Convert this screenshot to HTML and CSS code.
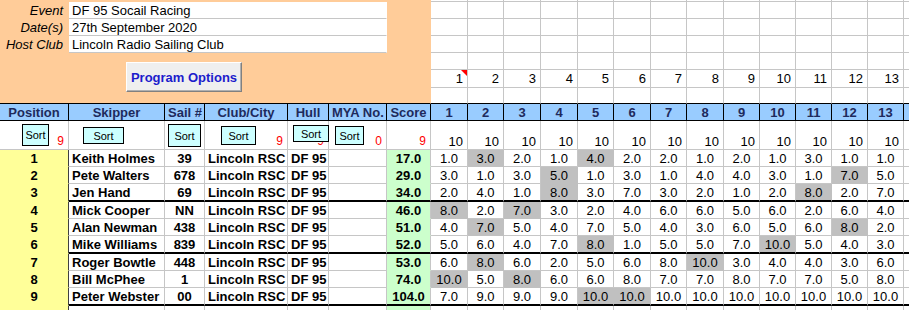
FILE: index.html
```html
<!DOCTYPE html>
<html lang="en">
<head>
<meta charset="UTF-8">
<title>DF 95 Socail Racing - Results</title>
<link rel="stylesheet" href="styles.css">
</head>
<body>

<table class="sheet">
    <colgroup>
        <col class="c-pos"><col class="c-skip"><col class="c-sail"><col class="c-club"><col class="c-hull"><col class="c-mya"><col class="c-score">
        <col class="c-r37"><col class="c-r36"><col class="c-r37"><col class="c-r37"><col class="c-r36"><col class="c-r37"><col class="c-r36">
        <col class="c-r37"><col class="c-r36"><col class="c-r36"><col class="c-r36"><col class="c-r36"><col class="c-r36"><col class="c-extra">
    </colgroup>

    <tr class="edge">
        <td class="band" colspan="7"></td>
        <td></td><td></td><td></td><td></td><td></td><td></td><td></td><td></td><td></td><td></td><td></td><td></td><td></td><td></td>
    </tr>
    <tr class="top">
        <td class="band lbl">Event</td>
        <td class="info" colspan="5">DF 95 Socail Racing</td>
        <td class="band"></td>
        <td></td><td></td><td></td><td></td><td></td><td></td><td></td><td></td><td></td><td></td><td></td><td></td><td></td><td></td>
    </tr>
    <tr class="top">
        <td class="band lbl">Date(s)</td>
        <td class="info" colspan="5">27th September 2020</td>
        <td class="band"></td>
        <td></td><td></td><td></td><td></td><td></td><td></td><td></td><td></td><td></td><td></td><td></td><td></td><td></td><td></td>
    </tr>
    <tr class="top">
        <td class="band lbl">Host Club</td>
        <td class="info" colspan="5">Lincoln Radio Sailing Club</td>
        <td class="band"></td>
        <td></td><td></td><td></td><td></td><td></td><td></td><td></td><td></td><td></td><td></td><td></td><td></td><td></td><td></td>
    </tr>
    <tr class="top">
        <td class="band foot" colspan="7" rowspan="3"><button class="prog">Program Options</button></td>
        <td></td><td></td><td></td><td></td><td></td><td></td><td></td><td></td><td></td><td></td><td></td><td></td><td></td><td></td>
    </tr>
    <tr class="nums">
        <td class="note">1</td><td>2</td><td>3</td><td>4</td><td>5</td><td>6</td><td>7</td><td>8</td><td>9</td><td>10</td><td>11</td><td>12</td><td>13</td><td></td>
    </tr>
    <tr class="gap">
        <td></td><td></td><td></td><td></td><td></td><td></td><td></td><td></td><td></td><td></td><td></td><td></td><td></td><td></td>
    </tr>

    <tr class="hd">
        <td>Position</td><td>Skipper</td><td>Sail #</td><td>Club/City</td><td>Hull</td><td>MYA No.</td><td>Score</td>
        <td>1</td><td>2</td><td>3</td><td>4</td><td>5</td><td>6</td><td>7</td><td>8</td><td>9</td><td>10</td><td>11</td><td>12</td><td>13</td><td></td>
    </tr>

    <tr class="srt">
        <td><button class="sort s-pos">Sort</button><span class="cnt">9</span></td>
        <td><button class="sort s-skip">Sort</button></td>
        <td><button class="sort s-sail">Sort</button></td>
        <td><button class="sort s-club">Sort</button><span class="cnt">9</span></td>
        <td><button class="sort s-hull">Sort</button><span class="cnt">9</span></td>
        <td><button class="sort s-mya">Sort</button><span class="cnt">0</span></td>
        <td><span class="cnt">9</span></td>
        <td>10</td><td>10</td><td>10</td><td>10</td><td>10</td><td>10</td><td>10</td><td>10</td><td>10</td><td>10</td><td>10</td><td>10</td><td>10</td><td></td>
    </tr>

    <tr class="row">
        <td class="pos">1</td><td class="txt">Keith Holmes</td><td class="sail">39</td><td class="txt">Lincoln RSC</td><td class="txt">DF 95</td><td></td><td class="score">17.0</td>
        <td class="r">1.0</td><td class="r drop">3.0</td><td class="r">2.0</td><td class="r">1.0</td><td class="r drop">4.0</td><td class="r">2.0</td><td class="r">2.0</td><td class="r">1.0</td><td class="r">2.0</td><td class="r">1.0</td><td class="r">3.0</td><td class="r">1.0</td><td class="r">1.0</td><td></td>
    </tr>
    <tr class="row">
        <td class="pos">2</td><td class="txt">Pete Walters</td><td class="sail">678</td><td class="txt">Lincoln RSC</td><td class="txt">DF 95</td><td></td><td class="score">29.0</td>
        <td class="r">3.0</td><td class="r">1.0</td><td class="r">3.0</td><td class="r drop">5.0</td><td class="r">1.0</td><td class="r">3.0</td><td class="r">1.0</td><td class="r">4.0</td><td class="r">4.0</td><td class="r">3.0</td><td class="r">1.0</td><td class="r drop">7.0</td><td class="r">5.0</td><td></td>
    </tr>
    <tr class="row cut">
        <td class="pos">3</td><td class="txt">Jen Hand</td><td class="sail">69</td><td class="txt">Lincoln RSC</td><td class="txt">DF 95</td><td></td><td class="score">34.0</td>
        <td class="r">2.0</td><td class="r">4.0</td><td class="r">1.0</td><td class="r drop">8.0</td><td class="r">3.0</td><td class="r">7.0</td><td class="r">3.0</td><td class="r">2.0</td><td class="r">1.0</td><td class="r">2.0</td><td class="r drop">8.0</td><td class="r">2.0</td><td class="r">7.0</td><td></td>
    </tr>
    <tr class="row">
        <td class="pos">4</td><td class="txt">Mick Cooper</td><td class="sail">NN</td><td class="txt">Lincoln RSC</td><td class="txt">DF 95</td><td></td><td class="score">46.0</td>
        <td class="r drop">8.0</td><td class="r">2.0</td><td class="r drop">7.0</td><td class="r">3.0</td><td class="r">2.0</td><td class="r">4.0</td><td class="r">6.0</td><td class="r">6.0</td><td class="r">5.0</td><td class="r">6.0</td><td class="r">2.0</td><td class="r">6.0</td><td class="r">4.0</td><td></td>
    </tr>
    <tr class="row">
        <td class="pos">5</td><td class="txt">Alan Newman</td><td class="sail">438</td><td class="txt">Lincoln RSC</td><td class="txt">DF 95</td><td></td><td class="score">51.0</td>
        <td class="r">4.0</td><td class="r drop">7.0</td><td class="r">5.0</td><td class="r">4.0</td><td class="r">7.0</td><td class="r">5.0</td><td class="r">4.0</td><td class="r">3.0</td><td class="r">6.0</td><td class="r">5.0</td><td class="r">6.0</td><td class="r drop">8.0</td><td class="r">2.0</td><td></td>
    </tr>
    <tr class="row cut">
        <td class="pos">6</td><td class="txt">Mike Williams</td><td class="sail">839</td><td class="txt">Lincoln RSC</td><td class="txt">DF 95</td><td></td><td class="score">52.0</td>
        <td class="r">5.0</td><td class="r">6.0</td><td class="r">4.0</td><td class="r">7.0</td><td class="r drop">8.0</td><td class="r">1.0</td><td class="r">5.0</td><td class="r">5.0</td><td class="r">7.0</td><td class="r drop">10.0</td><td class="r">5.0</td><td class="r">4.0</td><td class="r">3.0</td><td></td>
    </tr>
    <tr class="row">
        <td class="pos">7</td><td class="txt">Roger Bowtle</td><td class="sail">448</td><td class="txt">Lincoln RSC</td><td class="txt">DF 95</td><td></td><td class="score">53.0</td>
        <td class="r">6.0</td><td class="r drop">8.0</td><td class="r">6.0</td><td class="r">2.0</td><td class="r">5.0</td><td class="r">6.0</td><td class="r">8.0</td><td class="r drop">10.0</td><td class="r">3.0</td><td class="r">4.0</td><td class="r">4.0</td><td class="r">3.0</td><td class="r">6.0</td><td></td>
    </tr>
    <tr class="row">
        <td class="pos">8</td><td class="txt">Bill McPhee</td><td class="sail">1</td><td class="txt">Lincoln RSC</td><td class="txt">DF 95</td><td></td><td class="score">74.0</td>
        <td class="r drop">10.0</td><td class="r">5.0</td><td class="r drop">8.0</td><td class="r">6.0</td><td class="r">6.0</td><td class="r">8.0</td><td class="r">7.0</td><td class="r">7.0</td><td class="r">8.0</td><td class="r">7.0</td><td class="r">7.0</td><td class="r">5.0</td><td class="r">8.0</td><td></td>
    </tr>
    <tr class="row cut">
        <td class="pos">9</td><td class="txt">Peter Webster</td><td class="sail">00</td><td class="txt">Lincoln RSC</td><td class="txt">DF 95</td><td></td><td class="score">104.0</td>
        <td class="r">7.0</td><td class="r">9.0</td><td class="r">9.0</td><td class="r">9.0</td><td class="r drop">10.0</td><td class="r drop">10.0</td><td class="r">10.0</td><td class="r">10.0</td><td class="r">10.0</td><td class="r">10.0</td><td class="r">10.0</td><td class="r">10.0</td><td class="r">10.0</td><td></td>
    </tr>
    <tr class="row">
        <td class="pos"></td><td></td><td></td><td></td><td></td><td></td><td class="score"></td>
        <td></td><td></td><td></td><td></td><td></td><td></td><td></td><td></td><td></td><td></td><td></td><td></td><td></td><td></td>
    </tr>
</table>

</body>
</html>
```

FILE: styles.css
```css
body { margin: 0; font-family: "Liberation Sans", Arial, sans-serif; font-size: 13px; color: #000; background: #fff; overflow: hidden; }

.sheet { border-collapse: separate; border-spacing: 0; table-layout: fixed; width: 944px; }
.sheet td { padding: 0 3px; border-right: 1px solid #c6c6c6; border-bottom: 1px solid #c6c6c6; white-space: nowrap; overflow: hidden; vertical-align: middle; line-height: 15px; }

.c-pos { width: 69px; }
.c-skip { width: 96px; }
.c-sail { width: 40px; }
.c-club { width: 83px; }
.c-hull { width: 41px; }
.c-mya { width: 58px; }
.c-score { width: 44px; }
.c-r37 { width: 37px; }
.c-r36 { width: 36px; }
.c-extra { width: 41px; }

/* row heights */
.edge { height: 2px; }
.top { height: 17px; }
.nums { height: 18px; }
.gap { height: 16px; }
.hd { height: 17px; }
.srt { height: 29px; }
.row { height: 17px; }
.row.cut { height: 18px; }

/* event header block */
.sheet td.band { background: #ffcc99; border-right-color: #ffcc99; border-bottom-color: #ffcc99; }
.sheet td.band.foot { border-bottom-color: #000; vertical-align: top; padding: 9px 0 0 126px; }
.sheet td.lbl { font-style: italic; text-align: right; padding-right: 5px; }
.sheet td.info { background: #fff; border-right-color: #fff; border-bottom-color: #c6c6c6; }

.prog { display: block; width: 116px; height: 30px; padding: 0; background: #efefef; border: 1px solid; border-color: #fff #808080 #808080 #fff; box-shadow: inset -1px -1px 0 #b0b0b0; font-family: "Liberation Sans", Arial, sans-serif; font-size: 13px; font-weight: bold; color: #1c1ccc; }

.nums td { text-align: right; padding-right: 4px; }
.sheet td.note { position: relative; }
.note::after { content: ""; position: absolute; top: 0; right: 0; border-top: 6px solid #f00; border-left: 6px solid transparent; }
.gap td { border-bottom-color: #000; }

/* column headings */
.hd td { background: #99ccff; border-right-color: #000; border-bottom-color: #000; font-weight: bold; text-align: center; color: #1e2a5c; }

/* sort buttons row */
.srt td { position: relative; overflow: visible; vertical-align: bottom; text-align: right; padding-right: 4px; }
.cnt { color: #f00; font-size: 12px; }
.sort { position: absolute; z-index: 1; display: flex; align-items: center; justify-content: center; padding: 0; background: #ccffff; border: 1px solid #000; font-family: "Liberation Sans", Arial, sans-serif; font-size: 11px; color: #000; }
.s-pos { left: 22px; top: 3px; width: 27px; height: 22px; }
.s-skip { left: 14px; top: 6px; width: 41px; height: 17px; }
.s-sail { left: 3px; top: 3px; width: 33px; height: 23px; }
.s-club { left: 16px; top: 5px; width: 35px; height: 19px; }
.s-hull { left: 5px; top: 4px; width: 36px; height: 17px; }
.s-mya { left: 6px; top: 5px; width: 29px; height: 19px; }

/* results */
.sheet td.pos { background: #ffff99; border-bottom-color: #ffff99; border-right-color: #404040; font-weight: bold; text-align: center; }
.sheet td.txt { font-weight: bold; }
.sheet td.sail { font-weight: bold; text-align: center; }
.sheet td.score { background: #ccffcc; border-bottom-color: #ccffcc; font-weight: bold; text-align: center; padding: 0; }
.sheet td.r { text-align: center; padding: 0; }
.sheet td.drop { background: #c0c0c0; border-right-color: #c0c0c0; border-bottom-color: #c0c0c0; }
.row.cut td { border-bottom: 2px solid #000; }
.sheet .row.cut td.pos { border-bottom: 1px solid #ffff99; }
```
